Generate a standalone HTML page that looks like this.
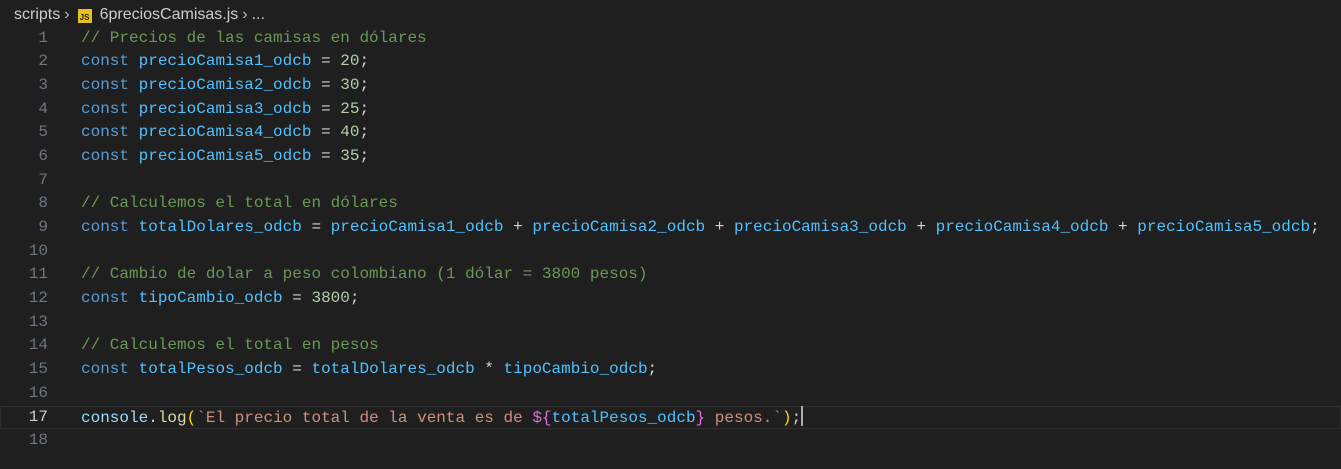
<!DOCTYPE html>
<html><head><meta charset="utf-8"><style>
html,body{margin:0;padding:0;background:#1f1f1f;width:1341px;height:469px;overflow:hidden}
.bc{position:absolute;left:14px;top:4px;height:22px;font:16px "Liberation Sans",sans-serif;color:#cccccc;line-height:22px;white-space:nowrap}
.bc .js{display:inline-block;width:14px;height:14px;background:#e8c11c;color:#1f1f1f;font:bold 8px "Liberation Sans",sans-serif;text-align:center;line-height:18px;vertical-align:-1px;margin:0 8px 0 4px}
.bc .ch{color:#bbb;margin:0 4px}
.code{position:absolute;left:0;top:26.5px;width:1341px;font:16px/23.7px "Liberation Mono",monospace}
.l{height:23.7px;position:relative}
.n{position:absolute;left:0;width:48px;text-align:right;color:#6e7681}
.t{position:absolute;left:81px;color:#d4d4d4;white-space:pre}
.cur{outline:1px solid #2e2e2e;outline-offset:-1px}
.cur .n{color:#cccccc}
.k{color:#569cd6}.v{color:#4fc1ff}.nu{color:#b5cea8}.c{color:#6a9955}.s{color:#ce9178}.f{color:#dcdcaa}.p{color:#9cdcfe}.y{color:#ffd700}.m{color:#da70d6}
.caret{display:inline-block;width:2px;height:20px;background:#aeafad;vertical-align:-4px}
</style></head><body>
<div class="bc">scripts<span class="ch">&#8250;</span><span class="js">JS</span>6preciosCamisas.js<span class="ch">&#8250;</span>...</div>
<div class="code"><div class="l"><span class="n">1</span><span class="t"><span class="c">// Precios de las camisas en dólares</span></span></div><div class="l"><span class="n">2</span><span class="t"><span class="k">const</span> <span class="v">precioCamisa1_odcb</span> = <span class="nu">20</span>;</span></div><div class="l"><span class="n">3</span><span class="t"><span class="k">const</span> <span class="v">precioCamisa2_odcb</span> = <span class="nu">30</span>;</span></div><div class="l"><span class="n">4</span><span class="t"><span class="k">const</span> <span class="v">precioCamisa3_odcb</span> = <span class="nu">25</span>;</span></div><div class="l"><span class="n">5</span><span class="t"><span class="k">const</span> <span class="v">precioCamisa4_odcb</span> = <span class="nu">40</span>;</span></div><div class="l"><span class="n">6</span><span class="t"><span class="k">const</span> <span class="v">precioCamisa5_odcb</span> = <span class="nu">35</span>;</span></div><div class="l"><span class="n">7</span></div><div class="l"><span class="n">8</span><span class="t"><span class="c">// Calculemos el total en dólares</span></span></div><div class="l"><span class="n">9</span><span class="t"><span class="k">const</span> <span class="v">totalDolares_odcb</span> = <span class="v">precioCamisa1_odcb</span> + <span class="v">precioCamisa2_odcb</span> + <span class="v">precioCamisa3_odcb</span> + <span class="v">precioCamisa4_odcb</span> + <span class="v">precioCamisa5_odcb</span>;</span></div><div class="l"><span class="n">10</span></div><div class="l"><span class="n">11</span><span class="t"><span class="c">// Cambio de dolar a peso colombiano (1 dólar = 3800 pesos)</span></span></div><div class="l"><span class="n">12</span><span class="t"><span class="k">const</span> <span class="v">tipoCambio_odcb</span> = <span class="nu">3800</span>;</span></div><div class="l"><span class="n">13</span></div><div class="l"><span class="n">14</span><span class="t"><span class="c">// Calculemos el total en pesos</span></span></div><div class="l"><span class="n">15</span><span class="t"><span class="k">const</span> <span class="v">totalPesos_odcb</span> = <span class="v">totalDolares_odcb</span> * <span class="v">tipoCambio_odcb</span>;</span></div><div class="l"><span class="n">16</span></div><div class="l cur"><span class="n">17</span><span class="t"><span class="p">console</span>.<span class="f">log</span><span class="y">(</span><span class="s">`El precio total de la venta es de </span><span class="m">${</span><span class="v">totalPesos_odcb</span><span class="m">}</span><span class="s"> pesos.`</span><span class="y">)</span>;<span class="caret"></span></span></div><div class="l"><span class="n">18</span></div></div>
</body></html>
